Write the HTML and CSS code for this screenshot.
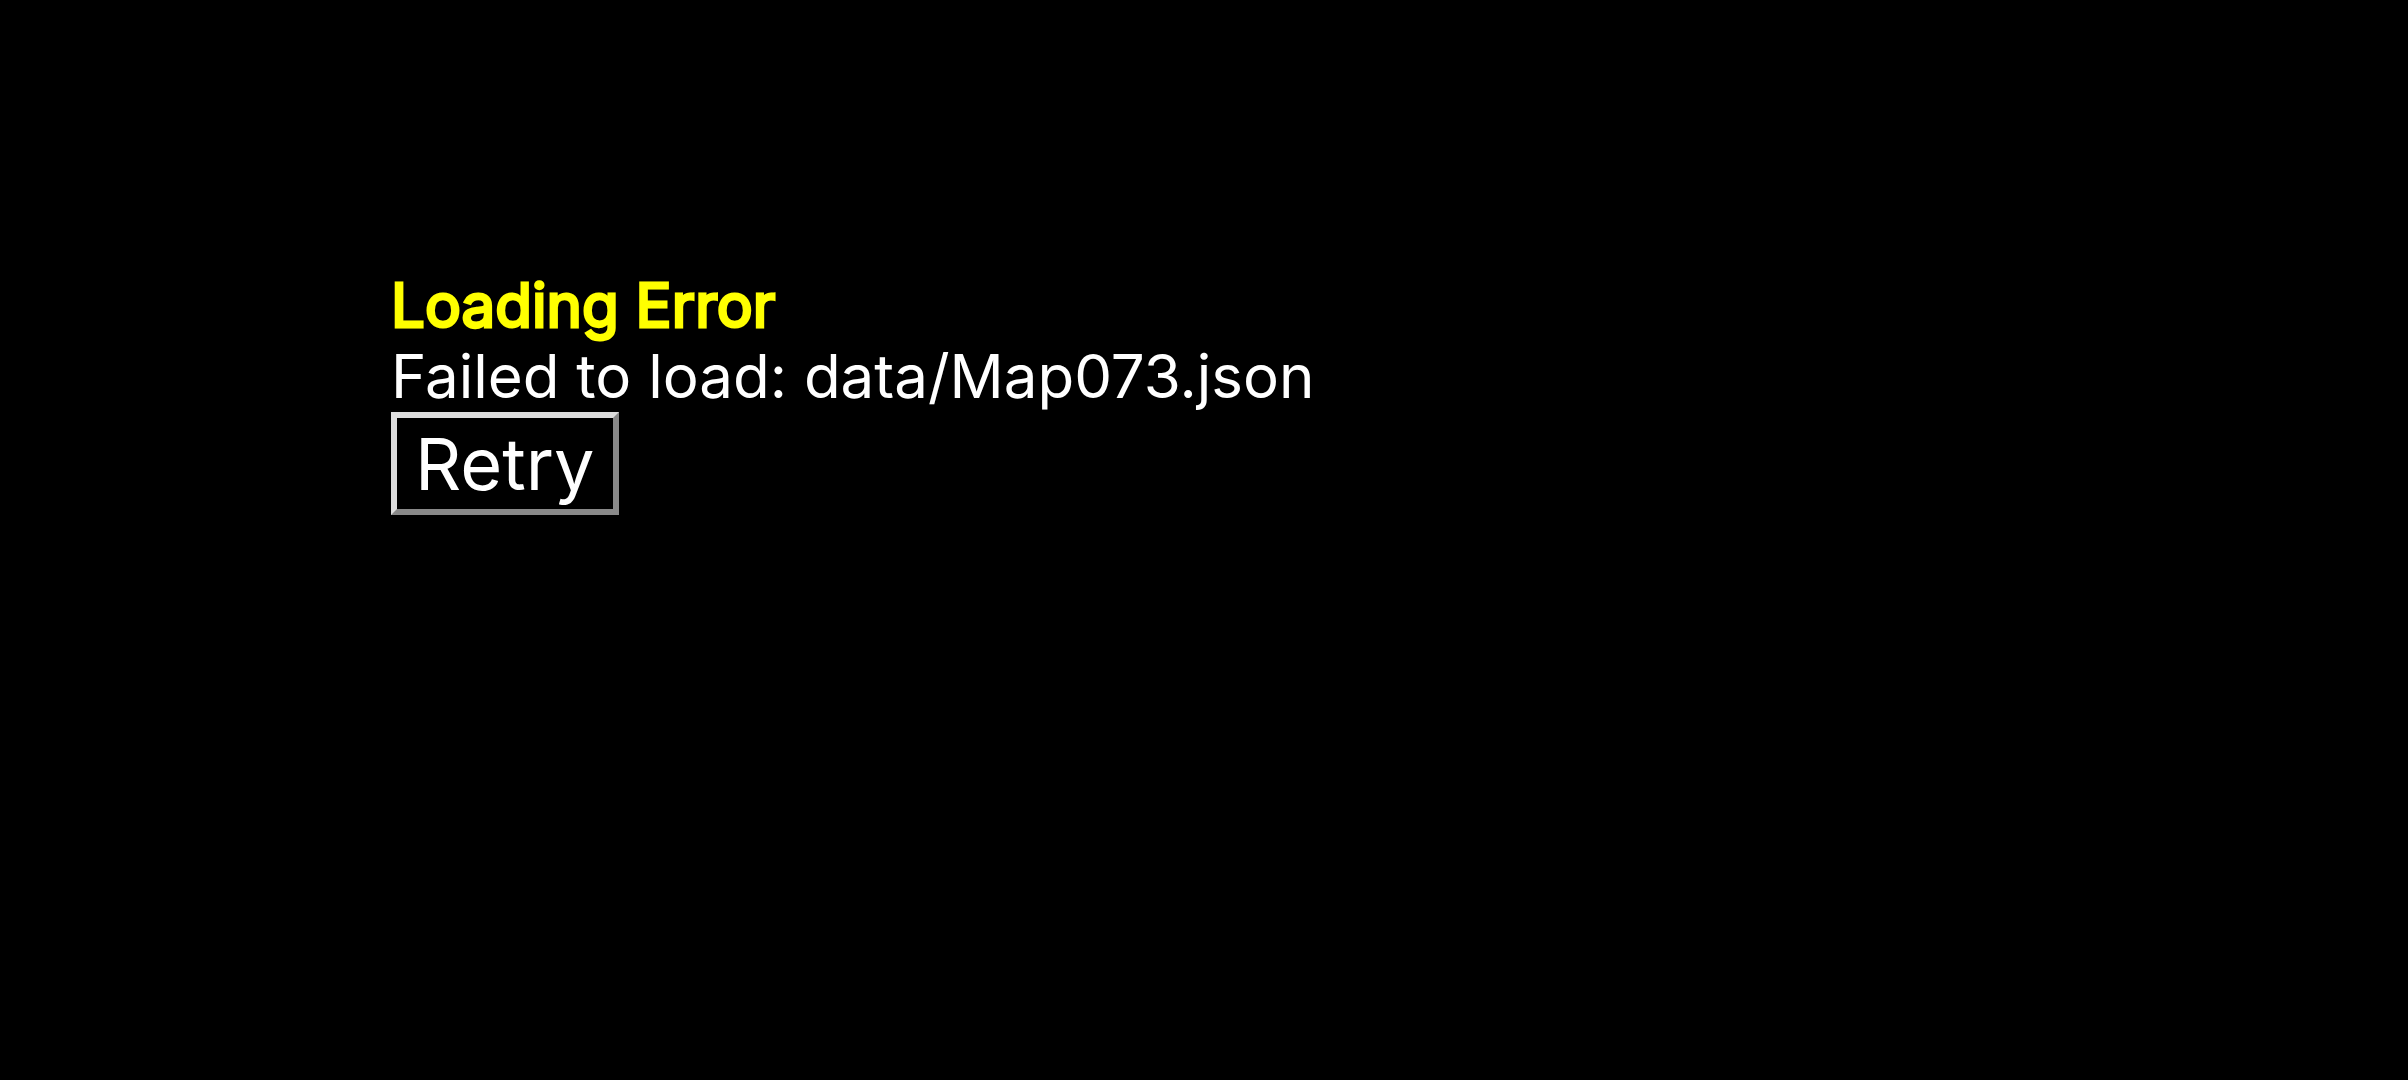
FILE: index.html
```
<!DOCTYPE html>
<html lang="en">
<head>
  <meta charset="UTF-8">
  <title>Loading Error</title>
  <link rel="stylesheet" href="styles.css">
</head>
<body>
  <div class="error-printer">
    <div class="error-name">Loading Error</div>
    <div class="error-message">Failed to load: data/Map073.json</div>
    <button type="button" class="retry-button">Retry</button>
  </div>
</body>
</html>
```

FILE: styles.css
```
body {
  margin: 0;
  background-color: #000;
  color: #fff;
  font-family: Inter, sans-serif;
}

.error-printer {
  padding: 270px 391px 0;
  font-size: 60px;
  line-height: 71px;
}

.error-name {
  color: #ff0;
  -webkit-text-stroke: 3px #ff0;
}

.retry-button {
  display: block;
  padding: 6px 18px;
  border: 6px outset #ddd;
  background-color: #000;
  color: #fff;
  font-family: inherit;
  font-size: 72px;
  line-height: 79px;
  cursor: pointer;
}
```
